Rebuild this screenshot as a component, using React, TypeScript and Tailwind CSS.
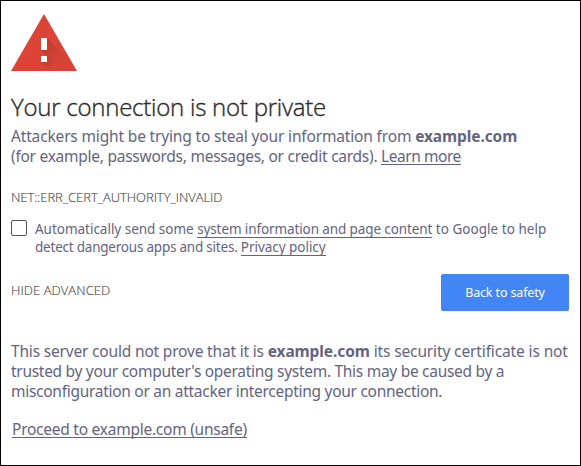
import type { ReactNode } from 'react';

function Line({ className = '', children }: { className?: string; children: ReactNode }) {
  return <div className={`whitespace-nowrap ${className}`}>{children}</div>;
}

function Link({ className = '', children }: { className?: string; children: ReactNode }) {
  return (
    <a href="#" className={`inline-block h-[17px] border-b border-[#646482] leading-[17px] ${className}`}>
      {children}
    </a>
  );
}

function WarningIcon() {
  return (
    <svg width="66" height="57" viewBox="0 0 66 57" className="block">
      <defs>
        <linearGradient id="shade" x1="33" y1="30" x2="46" y2="43" gradientUnits="userSpaceOnUse">
          <stop offset="0" stopColor="#bd3b30" />
          <stop offset="1" stopColor="#d64236" />
        </linearGradient>
        <linearGradient id="shade-dot" x1="33" y1="45" x2="41" y2="54" gradientUnits="userSpaceOnUse">
          <stop offset="0" stopColor="#bd3b30" />
          <stop offset="1" stopColor="#d64236" />
        </linearGradient>
      </defs>
      <path d="M33 0 66 57H0Z" fill="#db4437" />
      <path d="M36 24 58 46 64.4 57H51L30 36Z" fill="url(#shade)" />
      <path d="M36 42 51 57H39L30 48Z" fill="url(#shade-dot)" />
      <path d="M30 24h6v12h-6zM30 42h6v6h-6z" fill="#fff" />
    </svg>
  );
}

export default function App() {
  return (
    <main className="h-[466px] w-[581px] border border-black bg-white pl-[10px] pt-[13px] font-['Noto_Sans',sans-serif] text-[15.5px] leading-5 text-[#646482]">
      <WarningIcon />
      <h1 className="mt-[19px] h-[34px] whitespace-nowrap font-['Open_Sans',sans-serif] text-[24px] font-light leading-[34px] tracking-[-0.24px] text-[#2b2b2b] [-webkit-text-stroke:0.35px_#2b2b2b]">
        Your connection is not private
      </h1>
      <section className="mt-[2px]">
        <Line className="tracking-[-0.16px]">
          Attackers might be trying to steal your information from <b className="tracking-[-0.1px]">example.com</b>
        </Line>
        <Line className="tracking-[-0.26px]">
          (for example, passwords, messages, or credit cards). <Link className="tracking-[-0.45px]">Learn more</Link>
        </Line>
      </section>
      <div className="mt-[22px] h-[18px] whitespace-nowrap font-['Open_Sans',sans-serif] text-[13px] font-light leading-[18px] tracking-[-0.05px] text-[#4c4c4c] [-webkit-text-stroke:0.15px_#4c4c4c]">
        NET::ERR_CERT_AUTHORITY_INVALID
      </div>
      <section className="mt-[14px] flex text-[13.5px] leading-[18px]">
        <input type="checkbox" aria-label="Send system information" className="h-4 w-4 appearance-none rounded-[2px] border border-[#555]" />
        <div className="ml-2">
          <Line className="tracking-[-0.02px]">
            Automatically send some <Link className="tracking-[-0.11px]">system information and page content</Link>
            <span className="tracking-[0.04px]"> to Google to help</span>
          </Line>
          <Line className="tracking-[-0.22px]">
            detect dangerous apps and sites. <Link className="tracking-[-0.04px]">Privacy policy</Link>
          </Line>
        </div>
      </section>
      <div className="mt-[18px] flex justify-between pr-[11px]">
        <button className="mt-[7px] h-[18px] whitespace-nowrap font-['Open_Sans',sans-serif] text-[13px] font-light leading-[18px] tracking-[0.06px] text-[#4c4c4c] [-webkit-text-stroke:0.15px_#4c4c4c]">
          HIDE ADVANCED
        </button>
        <button className="h-[37px] w-[128px] whitespace-nowrap rounded-[2px] bg-[#4285f4] pt-px text-[12.5px] tracking-[-0.14px] text-white">
          Back to safety
        </button>
      </div>
      <section className="mt-[30px]">
        <Line className="tracking-[-0.18px]">
          This server could not prove that it is <b className="tracking-[-0.1px]">example.com</b>
          <span className="tracking-[-0.13px]"> its security certificate is not</span>
        </Line>
        <Line className="tracking-[-0.29px]">trusted by your computer's operating system. This may be caused by a</Line>
        <Line className="tracking-[-0.28px]">misconfiguration or an attacker intercepting your connection.</Line>
      </section>
      <div className="ml-px mt-[18px]">
        <Link className="tracking-[-0.25px]">Proceed to example.com (unsafe)</Link>
      </div>
    </main>
  );
}
